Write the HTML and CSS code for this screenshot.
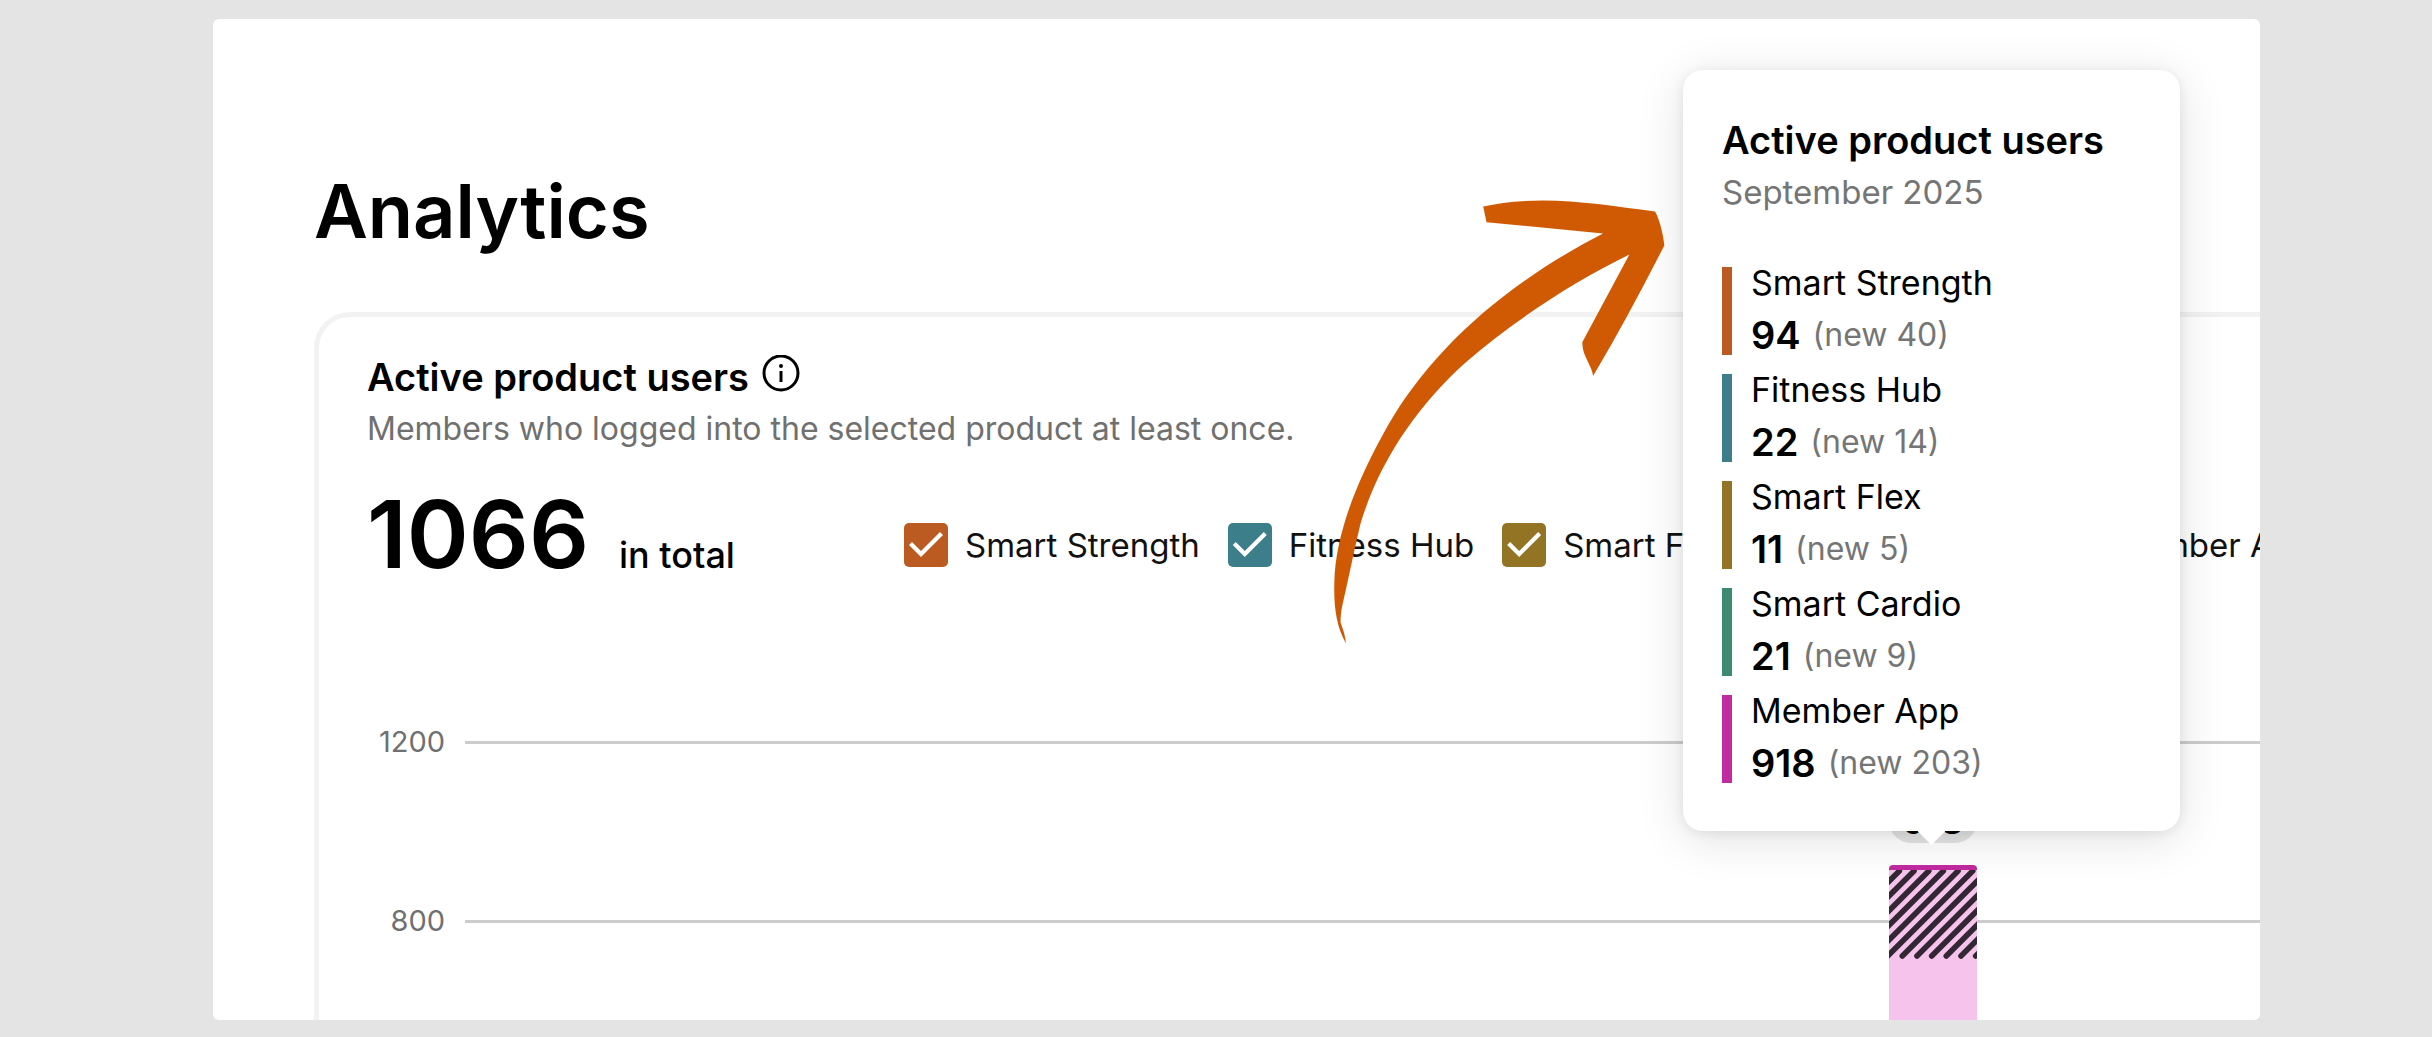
FILE: index.html
```html
<!DOCTYPE html>
<html lang="en">
<head>
<meta charset="utf-8">
<title>Analytics</title>
<link rel="stylesheet" href="styles.css">
</head>
<body>
<main class="panel">
  <h1 class="page-title">Analytics</h1>
  <section class="card">
    <div class="card-heading">
      <h2 class="card-title">Active product users</h2>
      <svg class="info-icon" viewBox="0 0 38 38" aria-hidden="true">
        <circle cx="19" cy="18" r="17" fill="none" stroke="#000" stroke-width="3"/>
        <path d="M19 16v11" stroke="#000" stroke-width="3"/>
        <circle cx="19" cy="11" r="2" fill="#000"/>
      </svg>
    </div>
    <p class="card-note">Members who logged into the selected product at least once.</p>
    <div class="summary">
      <p class="total"><strong class="total-value">1066</strong><span class="total-label">in total</span></p>
      <div class="legend">
        <label class="legend-item"><input type="checkbox" class="check strength" checked>Smart Strength</label>
        <label class="legend-item"><input type="checkbox" class="check hub" checked>Fitness Hub</label>
        <label class="legend-item"><input type="checkbox" class="check flex" checked>Smart Flex</label>
        <label class="legend-item"><input type="checkbox" class="check cardio" checked>Smart Cardio</label>
        <label class="legend-item"><input type="checkbox" class="check member" checked>Member App</label>
      </div>
    </div>
    <div class="chart">
      <div class="tick"><span class="tick-label">1200</span><span class="tick-line"></span></div>
      <div class="tick"><span class="tick-label">800</span><span class="tick-line"></span></div>
      <div class="plot">
        <div class="column" style="left:79.33%">
          <div class="badge">918
            <div class="tooltip">
              <h3 class="tooltip-title">Active product users</h3>
              <p class="tooltip-date">September 2025</p>
              <ul class="series">
                <li class="series-item strength"><span class="series-name">Smart Strength</span><span class="series-row"><b class="series-value">94</b><span class="series-new">(new 40)</span></span></li>
                <li class="series-item hub"><span class="series-name">Fitness Hub</span><span class="series-row"><b class="series-value">22</b><span class="series-new">(new 14)</span></span></li>
                <li class="series-item flex"><span class="series-name">Smart Flex</span><span class="series-row"><b class="series-value">11</b><span class="series-new">(new 5)</span></span></li>
                <li class="series-item cardio"><span class="series-name">Smart Cardio</span><span class="series-row"><b class="series-value">21</b><span class="series-new">(new 9)</span></span></li>
                <li class="series-item member"><span class="series-name">Member App</span><span class="series-row"><b class="series-value">918</b><span class="series-new">(new 203)</span></span></li>
              </ul>
            </div>
          </div>
          <div class="bar">
            <svg class="hatch" viewBox="0 5 88 89" aria-hidden="true">
              <g stroke="#332733" stroke-width="5.6" stroke-linecap="round">
                <path d="M-74.7 91L10.3 6M-60 91L25 6M-45.3 91L39.7 6M-30.7 91L54.3 6M-16 91L69 6M-1.3 91L83.7 6M13.3 91L98.3 6M28 91L113 6M42.7 91L127.7 6M57.3 91L142.3 6M72 91L157 6M86.7 91L171.7 6"/>
              </g>
            </svg>
          </div>
        </div>
      </div>
    </div>
  </section>
  <svg class="arrow" viewBox="160 120 1000 1335" aria-hidden="true">
    <path fill="#d05a04" d="M611 139C660 128 720 121 790 121C900 121 1010 139 1127 154C1140 176 1152 222 1155 256C1086 390 1016 522 941 648C940 620 906 584 909 546L1050 283C880 366 700 484 560 606C420 730 300 900 243 1090C226 1160 212 1230 199 1288C187 1340 182 1360 183 1389C190 1409 197 1427 199 1451C170 1400 162 1340 164 1270C166 1120 238 950 324 798C450 580 660 380 971 220L621 186Z"/>
  </svg>
</main>
</body>
</html>
```
FILE: styles.css
```css
* {
  box-sizing: border-box;
  margin: 0;
}

body {
  padding: 19px 172px 17px 213px;
  background: #e4e4e4;
  font-family: Inter, "Liberation Sans", sans-serif;
  font-size: 33px;
  line-height: 44px;
  color: #000;
}

.panel {
  position: relative;
  display: flex;
  flex-direction: column;
  height: calc(100vh - 36px);
  padding: 146px 0 0 101px;
  border-radius: 6px;
  background: #fff;
  overflow: hidden;
}

.page-title {
  margin-bottom: 55px;
  font-size: 74px;
  font-weight: 600;
  line-height: 92px;
}

.card {
  display: flex;
  flex: 1;
  flex-direction: column;
  padding: 38px 0 0 48px;
  border: solid #f2f2f2;
  border-width: 5px 0 0 5px;
  border-top-left-radius: 36px;
}

.card-heading {
  display: flex;
  gap: 13px;
}

.card-title,
.tooltip-title {
  font-size: 38px;
  font-weight: 600;
}

.info-icon {
  width: 38px;
  height: 38px;
}

.card-note {
  margin-top: 8px;
  font-size: 32px;
  color: #707070;
}

.summary {
  display: flex;
  align-items: flex-end;
  margin-top: 35px;
  white-space: nowrap;
}

.total {
  display: flex;
  flex: none;
  align-items: baseline;
  gap: 30px;
  width: 537px;
}

.total-value {
  font-size: 94px;
  font-weight: 600;
  line-height: 96px;
}

.total-label {
  font-size: 36px;
  font-weight: 500;
}

.legend {
  display: flex;
  gap: 28px;
  padding-bottom: 15px;
}

.legend-item {
  display: flex;
  flex: none;
  gap: 17px;
  color: #111;
}

.check {
  appearance: none;
  width: 44px;
  height: 44px;
  margin: 0;
  border-radius: 5px;
  background: var(--series);
}

.check:checked::before {
  content: "";
  display: block;
  height: 44px;
  background: #fff;
  clip-path: polygon(5px 22px, 8px 19px, 17px 28px, 36px 9px, 39px 12px, 17px 34px);
}

.strength { --series: #bb5b22; }
.hub { --series: #3c7f8a; }
.flex { --series: #927424; }
.cardio { --series: #3c8a72; }
.member { --series: #c12ba0; }

.chart {
  position: relative;
  flex: 1;
  margin-top: 138px;
}

.tick {
  display: flex;
  align-items: flex-start;
  gap: 20px;
  height: 179px;
}

.tick-label {
  width: 78px;
  font-size: 29px;
  text-align: right;
  color: #707070;
}

.tick-line {
  flex: 1;
  height: 3px;
  margin-top: 21px;
  background: #ccc;
}

.plot {
  position: absolute;
  inset: 0 0 0 98px;
}

.column {
  position: absolute;
  top: 79px;
  bottom: 0;
  display: flex;
  flex-direction: column;
  gap: 22px;
  width: 88px;
}

.badge {
  position: relative;
  border-radius: 22px;
  background: #e4e4e4;
  font-size: 36px;
  font-weight: 600;
  text-align: center;
}

.bar {
  flex: 1;
  border-top: 5px solid #c12ba0;
  border-radius: 4px 4px 0 0;
  background: #f6c3ec;
}

.hatch {
  display: block;
  width: 88px;
  height: 89px;
}

.tooltip {
  position: absolute;
  bottom: 12px;
  left: 50%;
  width: 497px;
  margin-left: -250px;
  padding: 48px 39px;
  border-radius: 20px;
  background: #fff;
  box-shadow: 0 8px 48px rgba(0, 0, 0, 0.12), 0 2px 12px rgba(0, 0, 0, 0.08);
  font-size: 33px;
  font-weight: 400;
  text-align: left;
  white-space: nowrap;
}

.tooltip::after {
  content: "";
  position: absolute;
  top: 100%;
  left: 50%;
  width: 28px;
  height: 14px;
  margin-left: -14px;
  background: #fff;
  clip-path: polygon(0 0, 100% 0, 50% 100%);
}

.tooltip-date {
  margin-top: 8px;
  color: #757575;
}

.series {
  display: flex;
  flex-direction: column;
  gap: 19px;
  margin-top: 53px;
  padding: 0;
  list-style: none;
}

.series-item {
  display: flex;
  flex-direction: column;
  gap: 16px;
  padding-left: 19px;
  border-left: 10px solid var(--series);
}

.series-name {
  font-size: 34px;
  line-height: 32px;
}

.series-row {
  display: flex;
  gap: 12px;
  line-height: 40px;
}

.series-value {
  font-size: 38px;
  font-weight: 600;
}

.series-new {
  font-size: 32px;
  color: #757575;
}

.arrow {
  position: absolute;
  top: 181px;
  left: 1120px;
  width: 333px;
  height: 445px;
}
```
